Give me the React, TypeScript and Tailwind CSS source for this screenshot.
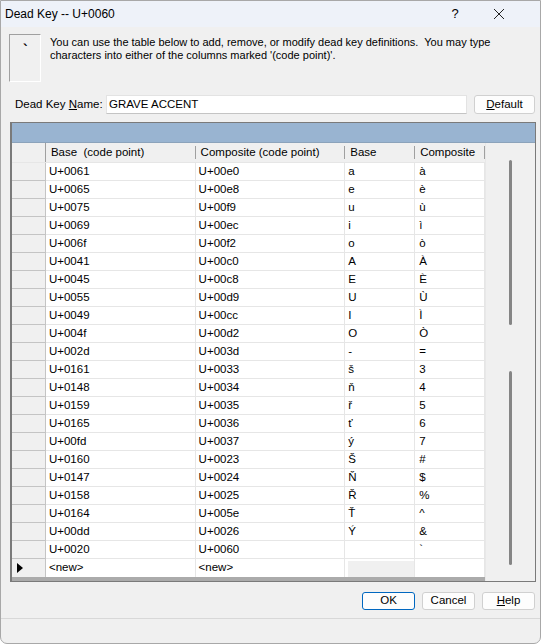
import React from 'react';

const rows: [string, string, string, string][] = [
	['U+0061', 'U+00e0', 'a', 'à'],
	['U+0065', 'U+00e8', 'e', 'è'],
	['U+0075', 'U+00f9', 'u', 'ù'],
	['U+0069', 'U+00ec', 'i', 'ì'],
	['U+006f', 'U+00f2', 'o', 'ò'],
	['U+0041', 'U+00c0', 'A', 'À'],
	['U+0045', 'U+00c8', 'E', 'È'],
	['U+0055', 'U+00d9', 'U', 'Ù'],
	['U+0049', 'U+00cc', 'I', 'Ì'],
	['U+004f', 'U+00d2', 'O', 'Ò'],
	['U+002d', 'U+003d', '-', '='],
	['U+0161', 'U+0033', 'š', '3'],
	['U+0148', 'U+0034', 'ň', '4'],
	['U+0159', 'U+0035', 'ř', '5'],
	['U+0165', 'U+0036', 'ť', '6'],
	['U+00fd', 'U+0037', 'ý', '7'],
	['U+0160', 'U+0023', 'Š', '#'],
	['U+0147', 'U+0024', 'Ň', '$'],
	['U+0158', 'U+0025', 'Ř', '%'],
	['U+0164', 'U+005e', 'Ť', '^'],
	['U+00dd', 'U+0026', 'Ý', '&'],
	['U+0020', 'U+0060', ' ', '`'],
];

function HeaderCell({ label, w }: { label: string; w: string }) {
	return (
		<div className={`${w} h-full flex items-center pl-[5px] relative whitespace-pre`}>
			{label}
			<span className="absolute right-0 top-[3px] bottom-[3px] w-px bg-[#a0a0a0]" />
		</div>
	);
}

function DataRow({ r }: { r: [string, string, string, string] }) {
	return (
		<div className="flex h-[18px]">
			<div className="w-[34px] bg-[#f0f0f0] border-b border-r border-[#c4c4c4]" />
			<div className="w-[150px] bg-white border-b border-r border-[#e6e6e6] pl-[3px] flex items-center">{r[0]}</div>
			<div className="w-[150px] bg-white border-b border-r border-[#e6e6e6] pl-[3px] flex items-center">{r[1]}</div>
			<div className="w-[70px] bg-white border-b border-r border-[#e6e6e6] pl-[3px] flex items-center">{r[2]}</div>
			<div className="w-[70px] bg-white border-b border-r border-[#e6e6e6] pl-[4px] flex items-center">{r[3]}</div>
		</div>
	);
}

function Btn({ children, primary }: { children: React.ReactNode; primary?: boolean }) {
	return (
		<div
			className={`w-[53px] h-[18px] rounded-[3px] flex items-center justify-center bg-[#fdfdfd] border ${
				primary ? 'border-[#0067c0]' : 'border-[#d0d0d0]'
			}`}
		>
			{children}
		</div>
	);
}

export default function App() {
	return (
		<div className="w-[544px] h-[644px] bg-white">
			<div
				className="w-[541px] h-[644px] bg-[#f0f0f0] border border-[#a8a8a8] rounded-b-[7px] flex flex-col overflow-hidden text-[11.5px] text-black"
				style={{ fontFamily: '"Liberation Sans", Arial, sans-serif' }}
			>
				{/* title bar */}
				<div className="h-[26px] bg-[#eef2f9] flex items-center pl-[4px] shrink-0 text-[12px]">
					<span>Dead Key -- U+0060</span>
					<span className="ml-auto w-[30px] text-center text-[13px]">?</span>
					<div className="w-[30px] ml-[14px] mr-[26px] flex justify-center">
						<svg width="12" height="12" viewBox="0 0 12 12">
							<path d="M1 1L11 11M11 1L1 11" stroke="#222" strokeWidth="1" fill="none" />
						</svg>
					</div>
				</div>

				{/* description */}
				<div className="flex pl-[8px] pt-[7px] shrink-0">
					<div className="w-[32px] h-[48px] border-t border-l border-[#a0a0a0] border-r border-b border-r-white border-b-white relative">
						<span className="absolute left-[13px] top-[5px] text-[14px] font-bold">`</span>
					</div>
					<div className="ml-[9px] pt-[2px] leading-[13px] whitespace-nowrap text-[11px]">
						You can use the table below to add, remove, or modify dead key definitions.&nbsp; You may type
						<br />
						characters into either of the columns marked '(code point)'.
					</div>
				</div>

				{/* name row */}
				<div className="flex items-center mt-[13px] pl-[14px] h-[19px] shrink-0">
					<span className="w-[91px] whitespace-nowrap">
						Dead Key <span className="underline">N</span>ame:
					</span>
					<div className="w-[361px] h-[19px] bg-white border border-[#e3e3e3] border-b-[#c4c4c4] flex items-center pl-[2px]">
						GRAVE ACCENT
					</div>
					<div className="ml-[7px] w-[61px] h-[19px] rounded-[3px] bg-[#fdfdfd] border border-[#d0d0d0] flex items-center justify-center">
						<span>
							<span className="underline">D</span>efault
						</span>
					</div>
				</div>

				{/* grid */}
				<div className="ml-[9px] mt-[8px] w-[526px] h-[460px] border border-[#7a7a7a] border-l-2 flex flex-col shrink-0">
					<div className="h-[20px] bg-[#99b4d1] border-b border-[#8ca3bb] shrink-0" />
					<div className="flex flex-1">
						<div className="w-[473px] bg-[#ababab] flex flex-col">
							<div className="flex h-[20px] bg-[#f0f0f0] border-b border-[#e6e6e6]">
								<div className="w-[34px] h-full border-r border-[#a0a0a0]" />
								<HeaderCell label="Base  (code point)" w="w-[150px]" />
								<HeaderCell label="Composite (code point)" w="w-[150px]" />
								<HeaderCell label="Base" w="w-[70px]" />
								<HeaderCell label="Composite" w="w-[70px]" />
							</div>
							{rows.map((r) => (
								<DataRow key={r[0]} r={r} />
							))}
							<div className="flex h-[18px]">
								<div className="w-[34px] bg-[#f0f0f0] border-r border-[#c4c4c4] flex items-center pl-[5px]">
									<svg width="6" height="10" viewBox="0 0 6 10">
										<path d="M0 0L6 5L0 10Z" fill="#000" />
									</svg>
								</div>
								<div className="w-[150px] bg-white border-r border-[#e6e6e6] pl-[3px] flex items-center">&lt;new&gt;</div>
								<div className="w-[150px] bg-white border-r border-[#e6e6e6] pl-[3px] flex items-center">&lt;new&gt;</div>
								<div className="w-[70px] bg-white border-r border-[#e6e6e6] pt-[2px] pl-[3px]">
									<div className="h-full bg-[#f0f0f0]" />
								</div>
								<div className="w-[70px] bg-white border-r border-[#e6e6e6]" />
							</div>
						</div>
						<div className="flex-1 bg-[#f0f0f0] border-l border-[#e8e8e8] flex flex-col items-center pt-[17px] pb-[16px]">
							<div className="w-[3px] h-[165px] bg-[#858585] rounded-full" />
							<div className="w-[3px] mt-[46px] flex-1 bg-[#858585] rounded-full" />
						</div>
					</div>
				</div>

				{/* buttons */}
				<div className="flex justify-end gap-[7px] pr-[5px] mt-[10px] shrink-0">
					<Btn primary>OK</Btn>
					<Btn>Cancel</Btn>
					<Btn>
						<span>
							<span className="underline">H</span>elp
						</span>
					</Btn>
				</div>

				<div className="mt-[8px] h-px bg-[#d8d8d8] shrink-0" />
			</div>
		</div>
	);
}
